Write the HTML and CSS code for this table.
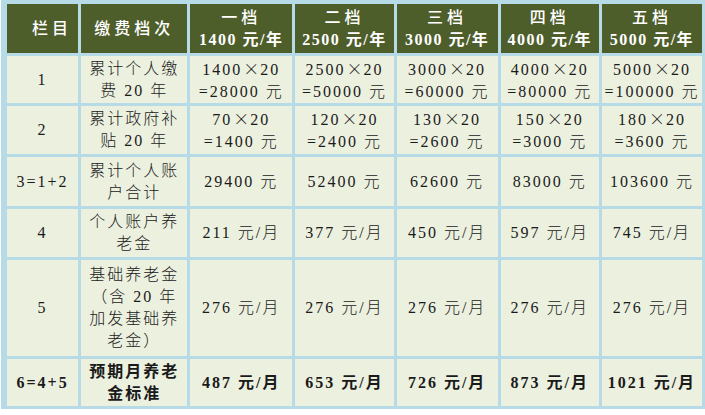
FILE: index.html
```html
<!DOCTYPE html>
<html lang="zh">
<head>
<meta charset="utf-8">
<link rel="stylesheet" href="styles.css">
</head>
<body>
<div class="wrap">
<table class="grid">
<colgroup>
<col class="c1"><col class="c2"><col class="c3"><col class="c4"><col class="c5"><col class="c6"><col class="c7">
</colgroup>
<thead>
<tr class="r0">
<th class="first">栏目</th>
<th>缴费档次</th>
<th>一档<br><b>1400 元/年</b></th>
<th>二档<br><b>2500 元/年</b></th>
<th>三档<br><b>3000 元/年</b></th>
<th>四档<br><b>4000 元/年</b></th>
<th>五档<br><b>5000 元/年</b></th>
</tr>
</thead>
<tbody>
<tr class="r1">
<td>1</td>
<td>累计个人缴<br>费 20 年</td>
<td>1400<span class="x">×</span>20<br>=28000 元</td>
<td>2500<span class="x">×</span>20<br>=50000 元</td>
<td>3000<span class="x">×</span>20<br>=60000 元</td>
<td>4000<span class="x">×</span>20<br>=80000 元</td>
<td>5000<span class="x">×</span>20<br>=100000 元</td>
</tr>
<tr class="r2">
<td>2</td>
<td>累计政府补<br>贴 20 年</td>
<td>70<span class="x">×</span>20<br>=1400 元</td>
<td>120<span class="x">×</span>20<br>=2400 元</td>
<td>130<span class="x">×</span>20<br>=2600 元</td>
<td>150<span class="x">×</span>20<br>=3000 元</td>
<td>180<span class="x">×</span>20<br>=3600 元</td>
</tr>
<tr class="r3">
<td>3=1+2</td>
<td>累计个人账<br>户合计</td>
<td>29400 元</td>
<td>52400 元</td>
<td>62600 元</td>
<td>83000 元</td>
<td>103600 元</td>
</tr>
<tr class="r4">
<td>4</td>
<td>个人账户养<br>老金</td>
<td>211 元/月</td>
<td>377 元/月</td>
<td>450 元/月</td>
<td>597 元/月</td>
<td>745 元/月</td>
</tr>
<tr class="r5">
<td>5</td>
<td>基础养老金<br>（含 20 年<br>加发基础养<br>老金）</td>
<td>276 元/月</td>
<td>276 元/月</td>
<td>276 元/月</td>
<td>276 元/月</td>
<td>276 元/月</td>
</tr>
<tr class="r6 total">
<td>6=4+5</td>
<td>预期月养老<br>金标准</td>
<td>487 元/月</td>
<td>653 元/月</td>
<td>726 元/月</td>
<td>873 元/月</td>
<td>1021 元/月</td>
</tr>
</tbody>
</table>
</div>
</body>
</html>
```

FILE: styles.css
```css
html, body {
  margin: 0;
  padding: 0;
  background: #ffffff;
}

.wrap {
  display: inline-block;
  margin-left: 1px;
  padding: 1px 0 0 3px;
  background: #b6dbe6;
}

.grid {
  table-layout: fixed;
  border-collapse: separate;
  border-spacing: 3px;
  width: 701px;
  font-family: "Liberation Serif", "Noto Sans CJK SC", serif;
  font-size: 16px;
  line-height: 22px;
  letter-spacing: 2px;
  color: #1a1a1a;
}

.c1 { width: 71px; }
.c2 { width: 106px; }
.c3 { width: 102px; }
.c4 { width: 98px; }
.c5 { width: 101px; }
.c6 { width: 98px; }
.c7 { width: 100px; }

.grid th,
.grid td {
  padding: 0;
  text-align: center;
  vertical-align: middle;
  white-space: nowrap;
  overflow: hidden;
}

.grid th {
  background: #4e5e2b;
  color: #ffffff;
  font-weight: 500;
  letter-spacing: 4px;
}

.grid th b {
  font-weight: bold;
  letter-spacing: 1.5px;
}

.grid th.first {
  padding-left: 19px;
}

.grid td {
  background: #ecf0df;
  font-weight: 300;
}

.x {
  font-family: "Noto Sans CJK SC", sans-serif;
  font-weight: 300;
  letter-spacing: 0;
  padding: 0 1px;
}

.r0 { height: 49px; }
.r1 { height: 47px; }
.r2 { height: 48px; }
.r3 { height: 49px; }
.r4 { height: 48px; }
.r5 { height: 96px; }
.r6 { height: 47px; }

.grid .total td {
  font-weight: bold;
  letter-spacing: 2px;
}
```
